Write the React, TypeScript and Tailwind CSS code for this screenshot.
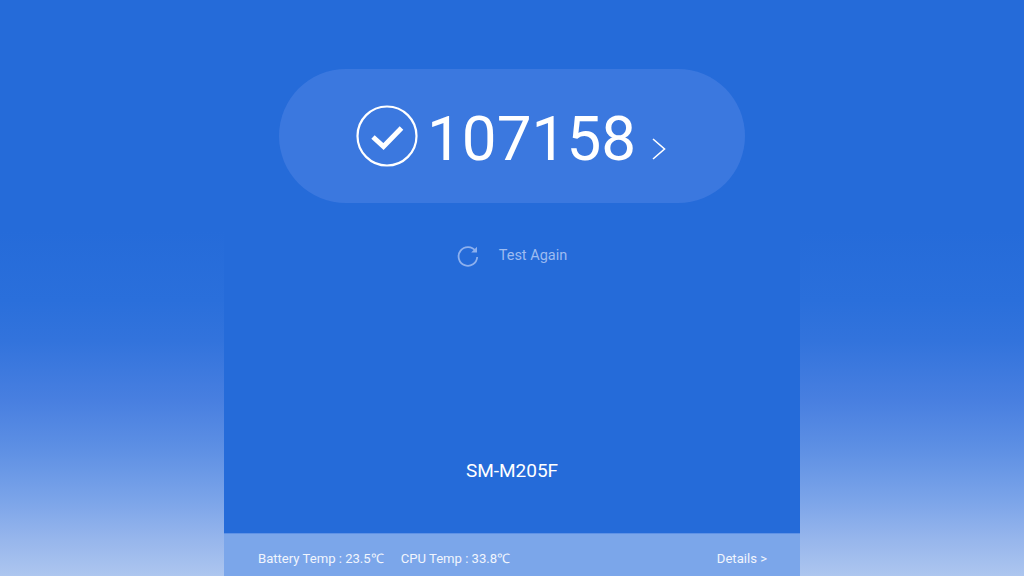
export default function App() {
  return (
    <div className="flex h-[576px] w-[1024px] justify-center overflow-hidden bg-[linear-gradient(to_bottom,#256bd9_0px,#256bd9_230px,#2a6fdb_300px,#3273dc_340px,#487fe0_400px,#5e90e4_450px,#7ba4e9_500px,#97b6ec_540px,#adc6ef_576px)] font-['Roboto',sans-serif]">
      <div className="flex h-full w-[576px] flex-col bg-[#256bd9]">
        <div className="flex flex-1 flex-col items-center pt-[69px]">
          <div className="flex h-[134px] w-[466px] items-center rounded-[67px] bg-[#3b78df] pl-[77px]">
            <svg width="62" height="62" viewBox="0 0 62 62" fill="none" className="shrink-0">
              <circle cx="31" cy="31" r="29.5" stroke="#fff" strokeWidth="2.2" />
              <path d="M17 32 L27.5 41.5 L45.5 23" stroke="#fff" strokeWidth="5" />
            </svg>
            <span className="ml-[9px] mt-[5px] text-[62px] leading-none text-white">107158</span>
            <svg width="16" height="24" viewBox="0 0 16 24" fill="none" className="ml-[15px] mt-[25px] shrink-0">
              <path d="M2 2 L13.5 12 L2 22" stroke="#fff" strokeWidth="1.6" />
            </svg>
          </div>
          <div className="mt-[41px] flex h-[24px] items-center">
            <svg width="22" height="22" viewBox="0 0 22 22" fill="none" className="shrink-0">
              <path d="M18.6 6.2 A9.3 9.3 0 1 0 20.2 12" stroke="#8db0ee" strokeWidth="1.8" />
              <path d="M14.2 7.6 L20 7.6 L20 1.8 Z" fill="#8db0ee" />
            </svg>
            <span className="ml-[20px] mt-[1px] text-[14.5px] leading-none text-[#9dbcf1]">Test Again</span>
          </div>
          <div className="mt-[191px] text-[19px] leading-[24px] text-white">SM-M205F</div>
        </div>
        <div className="flex h-[43px] items-center justify-between border-t border-[#5f92e6] bg-[#7ba6ea] pl-[34px] pr-[33px] pt-[7px] text-[13.1px] text-[#f1f5fd]">
          <div className="flex gap-[17px]">
            <span>Battery Temp : 23.5℃</span>
            <span>CPU Temp : 33.8℃</span>
          </div>
          <span>Details &gt;</span>
        </div>
      </div>
    </div>
  );
}
